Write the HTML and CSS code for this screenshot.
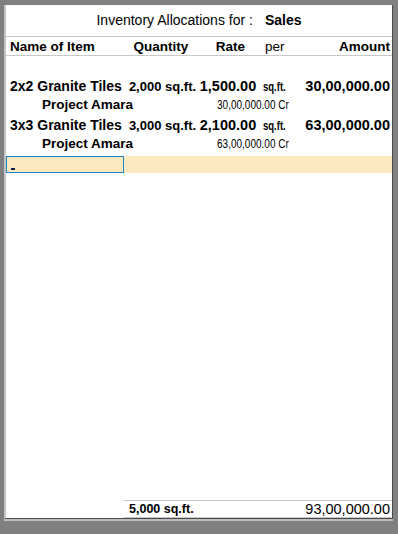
FILE: index.html
```html
<!DOCTYPE html>
<html lang="en">
<head>
    <meta charset="UTF-8">
    <title>Inventory Allocations</title>
    <link rel="stylesheet" href="styles.css">
</head>
<body>

<div class="frame">
    <div class="title">
        Inventory Allocations for :<b>Sales</b>
    </div>

    <div class="row head">
        <div class="c-name">Name of Item</div>
        <div class="c-qty">Quantity</div>
        <div class="c-rate right">Rate</div>
        <div class="c-per per-head">per</div>
        <div class="c-amt">Amount</div>
    </div>

    <div class="items">
        <div class="row item">
            <div class="c-name">2x2 Granite Tiles</div>
            <div class="c-qty">2,000 sq.ft.</div>
            <div class="c-rate">1,500.00</div>
            <div class="c-per"><span class="narrow bold">sq.ft.</span></div>
            <div class="c-amt">30,00,000.00</div>
        </div>
        <div class="row sub">
            <div class="c-godown">Project Amara</div>
            <div class="c-val"><span class="narrow">30,00,000.00 Cr</span></div>
        </div>

        <div class="row item second">
            <div class="c-name">3x3 Granite Tiles</div>
            <div class="c-qty">3,000 sq.ft.</div>
            <div class="c-rate">2,100.00</div>
            <div class="c-per"><span class="narrow bold">sq.ft.</span></div>
            <div class="c-amt">63,00,000.00</div>
        </div>
        <div class="row sub">
            <div class="c-godown">Project Amara</div>
            <div class="c-val"><span class="narrow">63,00,000.00 Cr</span></div>
        </div>

        <div class="entry">
            <div class="entry-box"><span class="cursor"></span></div>
        </div>
    </div>

    <div class="total">
        <div class="t-qty">5,000 sq.ft.</div>
        <div class="t-amt">93,00,000.00</div>
    </div>
</div>

</body>
</html>
```

FILE: styles.css
```css
body {
    margin: 0;
    background: #808080;
    font-family: "Liberation Sans", Arial, sans-serif;
    color: #000;
    height: 534px;
    overflow: hidden;
}
.frame {
    margin: 5px 0 0 4px;
    width: 386px;
    height: 513px;
    background: #fff;
    border-left: 2px solid #c4c4c4;
    border-right: 1px solid #4a4a4a;
    border-bottom: 1px solid #4a4a4a;
    box-shadow: 0 2px 0 #bdbdbd;
    display: flex;
    flex-direction: column;
}
.title {
    height: 31px;
    line-height: 31px;
    font-size: 14px;
    text-align: center;
    border-bottom: 1px solid #c8c8c8;
}
.title b {
    margin-left: 12px;
}
.row {
    display: grid;
    grid-template-columns: 119px 72px 62px 45px 86px;
    align-items: center;
    font-size: 14px;
}
.head {
    height: 18px;
    font-size: 13.5px;
    font-weight: bold;
    border-bottom: 1px solid #c8c8c8;
}
.c-name {
    padding-left: 4px;
    white-space: nowrap;
}
.c-qty, .c-rate {
    text-align: center;
    white-space: nowrap;
}
.item .c-qty {
    font-size: 13px;
    padding-left: 3px;
}
.item .c-rate {
    font-size: 14.5px;
}
.c-rate.right {
    text-align: right;
    padding-right: 14px;
}
.c-per {
    padding-left: 4px;
    white-space: nowrap;
}
.per-head {
    font-weight: normal;
    padding-left: 6px;
}
.c-amt {
    text-align: right;
    white-space: nowrap;
}
.item .c-amt {
    font-size: 14.5px;
}
.items {
    flex: 1;
    padding-top: 21px;
}
.item {
    height: 18px;
    font-weight: bold;
}
.item.second {
    margin-top: 3px;
}
.sub {
    height: 18px;
}
.c-godown {
    padding-left: 36px;
    font-size: 13.5px;
    font-weight: bold;
    white-space: nowrap;
}
.c-val {
    grid-column: 3 / span 2;
    padding-left: 20px;
    white-space: nowrap;
}
.narrow {
    display: inline-block;
    font-size: 13px;
    transform: scaleX(0.77);
    transform-origin: left center;
}
.narrow.bold {
    font-weight: bold;
    font-size: 12.5px;
    transform: scaleX(0.76);
}
.entry {
    margin-top: 4px;
    height: 17px;
    background: #fde9bf;
}
.entry-box {
    width: 116px;
    height: 15px;
    border: 1px solid #1a86c8;
    position: relative;
}
.cursor {
    position: absolute;
    left: 4px;
    bottom: 2px;
    width: 4px;
    height: 2px;
    background: #0b1a4a;
}
.total {
    margin-left: 118px;
    height: 16px;
    border-top: 1px solid #c8c8c8;
    border-bottom: 1px solid #c8c8c8;
    display: flex;
    justify-content: space-between;
    align-items: center;
    padding: 0 2px 0 5px;
}
.t-qty {
    font-size: 12.5px;
    font-weight: bold;
}
.t-amt {
    font-size: 14.5px;
}
```
